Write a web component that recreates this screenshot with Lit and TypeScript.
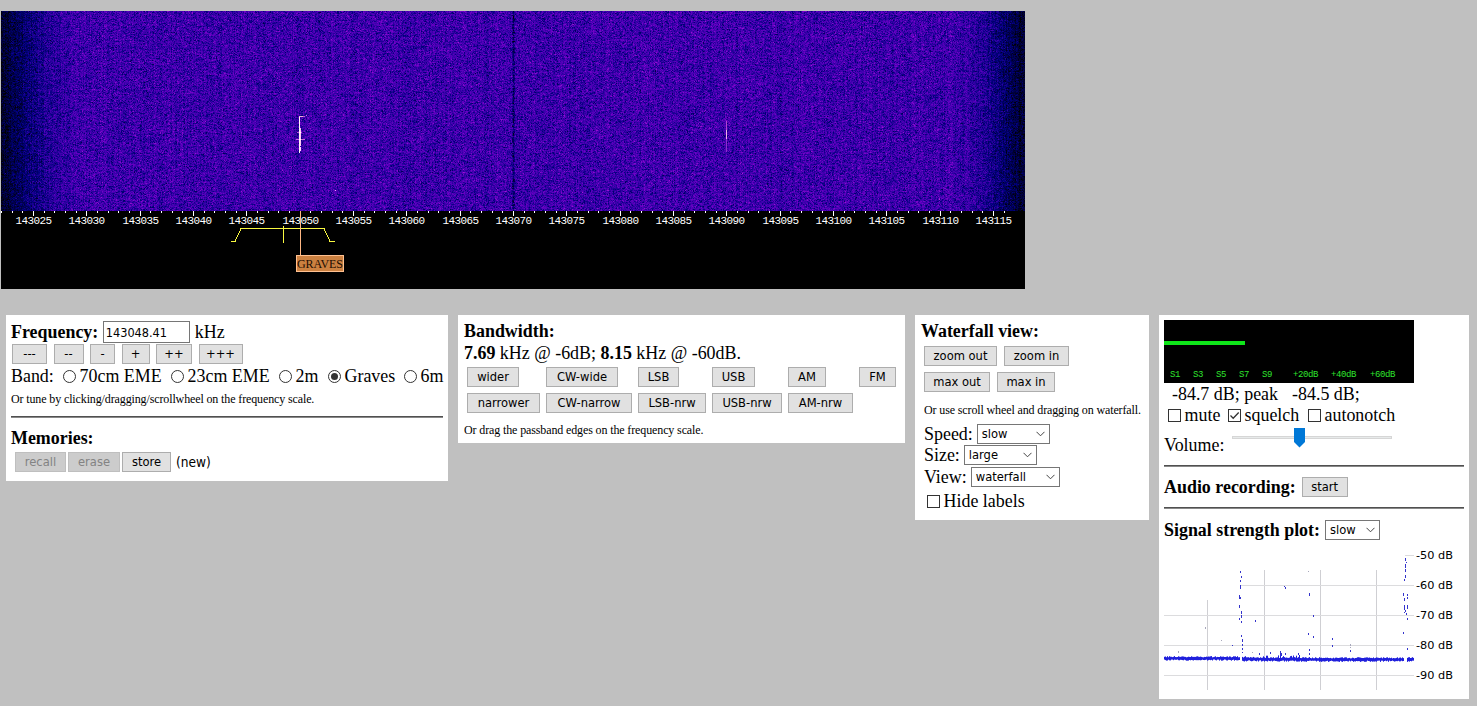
import { LitElement, html, svg, css } from "lit";
import { customElement, property } from "lit/decorators.js";

/* Small deterministic generator so that the noise is stable between paints. */
function random(seed: number) {
  let s = seed >>> 0;
  return () => {
    s = (s + 0x6d2b79f5) >>> 0;
    let t = s;
    t = Math.imul(t ^ (t >>> 15), t | 1);
    t ^= t + Math.imul(t ^ (t >>> 7), t | 61);
    return ((t ^ (t >>> 14)) >>> 0) / 4294967296;
  };
}

const STOPS: [number, number, number, number][] = [
  [0, 0, 0, 0],
  [0.3, 0, 0, 124],
  [0.5, 56, 0, 170],
  [0.7, 104, 0, 196],
  [0.88, 164, 24, 212],
  [1, 255, 200, 255],
];

function palette(v: number): [number, number, number] {
  v = Math.max(0, Math.min(1, v));
  for (let i = 1; i < STOPS.length; i++) {
    if (v <= STOPS[i][0]) {
      const a = STOPS[i - 1];
      const b = STOPS[i];
      const f = (v - a[0]) / (b[0] - a[0]);
      return [a[1] + (b[1] - a[1]) * f, a[2] + (b[2] - a[2]) * f, a[3] + (b[3] - a[3]) * f];
    }
  }
  return [255, 255, 255];
}

@customElement("wf-display")
export class WfDisplay extends LitElement {
  static styles = css`
    :host { display: block; width: 1024px; height: 278px; background: #000; }
    canvas, svg { display: block; }
    .digits { font: 11px "Liberation Mono", monospace; letter-spacing: -0.6px; fill: #fff; }
    .station { font: 12px "Liberation Serif", serif; fill: #1c0c00; }
  `;

  firstUpdated() {
    const canvas = this.renderRoot.querySelector("canvas") as HTMLCanvasElement;
    const ctx = canvas.getContext("2d")!;
    const W = 1024;
    const H = 200;
    const img = ctx.createImageData(W, H);
    const rnd = random(143050);
    const column: number[] = [];
    for (let x = 0; x < W; x++) {
      let c = (rnd() - 0.5) * 0.09;
      if (x >= 511 && x <= 513) c -= x === 512 ? 0.26 : 0.15;
      column.push(c);
    }
    for (let y = 0; y < H; y++) {
      let drift = 0;
      for (let x = 0; x < W; x++) {
        const edge = Math.min(x / 84, (W - 1 - x) / 76, 1);
        const level = 0.09 + 0.42 * Math.sin((edge * Math.PI) / 2);
        const n = (rnd() + rnd() + rnd() - 1.5) / 1.5;
        drift = drift * 0.45 + n * 0.55;
        let v = level + column[x] + (n * 0.26 + drift * 0.14) * (0.55 + 0.45 * edge);
        if (rnd() > 0.9996) v += 0.2;
        const [r, g, b] = palette(v);
        const i = (y * W + x) * 4;
        img.data[i] = r;
        img.data[i + 1] = g;
        img.data[i + 2] = b;
        img.data[i + 3] = 255;
      }
    }
    ctx.putImageData(img, 0, 0);
    const mark = (c: string, x: number, y: number, w: number, h: number) => {
      ctx.fillStyle = c;
      ctx.fillRect(x, y, w, h);
    };
    mark("#fff0f4", 298, 105, 1, 37);
    mark("#ffc8f4", 299, 117, 1, 18);
    mark("#ffd8ff", 299, 136, 1, 4);
    mark("#f4a8d8", 298, 105, 4, 1);
    mark("#b858d8", 302, 105, 2, 1);
    mark("#c468dc", 295, 128, 9, 1);
    mark("#b450d4", 296, 121, 5, 1);
    mark("#ffffff", 298, 121, 2, 1);
    mark("#ffffff", 298, 128, 2, 1);
    mark("#b044d0", 725, 110, 1, 12);
    mark("#f0b0e8", 725, 119, 1, 9);
    mark("#8c30cc", 725, 128, 1, 13);
    mark("#c070e0", 305, 104, 1, 1);
  }

  render() {
    const ticks = Array.from({ length: 95 }, (_, i) => i - 3);
    return html`
      <canvas width="1024" height="200"></canvas>
      <svg width="1024" height="78" shape-rendering="crispEdges">
        ${ticks.map((k) => {
          const x = 32 + Math.round((k * 32) / 3);
          return svg`<rect x=${x} y="0" width="1" height=${k % 5 === 0 ? 5 : 2} fill="#fff"></rect>`;
        })}
        ${Array.from({ length: 19 }, (_, i) => svg`
          <text class="digits" x=${14.5 + Math.round((i * 160) / 3)} y="13">${143025 + i * 5}</text>`)}
        <path d="M230 30.5H234L240 17.5H323L329 30.5H334" fill="none" stroke="#f8f840"></path>
        <rect x="282" y="15" width="1" height="17" fill="#f8f840"></rect>
        <rect x="299" y="0" width="1" height="44" fill="#ffb884"></rect>
        <rect x="295.5" y="44.500" width="47" height="16" fill="#cb8040" stroke="#ffc090"></rect>
        <text class="station" x="296" y="57" textLength="46">GRAVES</text>
      </svg>`;
  }
}

@customElement("pick-list")
export class PickList extends LitElement {
  @property() value = "";
  @property({ type: Number }) width = 73;
  static styles = css`
    :host { display: inline-block; }
    .box {
      display: flex; align-items: center; justify-content: space-between;
      box-sizing: border-box; height: 20px; padding: 0 4px;
      border: 1px solid #767676; background: #fff; color: #000;
      font: 12.8px/18px "DejaVu Sans Condensed", "DejaVu Sans", sans-serif;
    }
  `;
  render() {
    return html`<div class="box" style="width:${this.width}px">
      <span>${this.value}</span>
      <svg width="9" height="6"><path d="M.5 .8L4.500 4.800L8.500 .8" fill="none" stroke="#444"></path></svg>
    </div>`;
  }
}

@customElement("app-root")
export class AppRoot extends LitElement {
  static styles = css`
    :host {
      display: block; box-sizing: border-box; width: 1477px; height: 706px; overflow: hidden;
      padding-top: 11px; background: #c0c0c0; color: #000;
      font: 17.93px/20px "Liberation Serif", serif; white-space: nowrap;
    }
    wf-display { margin-left: 1px; }
    .panels { display: flex; align-items: flex-start; gap: 10px; margin: 26px 0 0 6px; }
    .panel { box-sizing: border-box; display: grid; align-items: center; padding: 5px; background: #fff; }
    .tune { width: 442px; height: 166px; grid-template-rows: 24px 20px 24px 22px 14px 28px 20px; }
    .band { width: 447px; height: 128px; grid-template-rows: 22px 22px 49px 34px; padding-left: 6px; }
    .view { width: 234px; height: 205px; grid-template-rows: 22px 28px 24px 32px 16px 26px 18px 30px; padding-left: 9px; }
    .audio { width: 310px; height: 384px; grid-template-rows: 63px 22px 20px 40px 2px 40px 2px 36px 149px; }
    .row { display: flex; align-items: center; }
    .small { font-size: 12px; letter-spacing: -0.125px; }
    .rule { height: 2px; background: linear-gradient(#505050 50%, #888 50%); }
    .title { font-weight: bold; }
    .view .title { margin-left: -3px; }
    button {
      box-sizing: border-box; height: 20px; padding: 0; border: 1px solid #adadad; border-radius: 0;
      background: #e1e1e1; color: #000;
      font: 12.8px/18px "DejaVu Sans Condensed", "DejaVu Sans", sans-serif;
    }
    button:disabled { border-color: #bfbfbf; background: #ccc; color: #838383; }
    .sans { font: 13.6px/18px "DejaVu Sans Condensed", "DejaVu Sans", sans-serif; }
    .steps { gap: 6.5px; padding-left: 1px; }
    .memory { gap: 2px; padding-left: 4px; }
    .memory .sans { margin-left: 3px; }
    .freq {
      box-sizing: border-box; width: 87px; height: 22px; margin: 0 5px 0 4.500px; padding: 0 2px;
      border: 1px solid #767676; border-radius: 0; background: #fff; color: #000;
      font: 12.6px/18px "DejaVu Sans Condensed", "DejaVu Sans", sans-serif;
    }
    .choice { display: flex; align-items: center; gap: 3.5px; }
    .choice svg { flex: none; }
    .modes {
      display: grid; align-self: end; margin-left: 3px; justify-items: start; row-gap: 6px;
      grid-template-columns: 79px 92px 74px 76px 71px 38px;
    }
    .zooms { gap: 7px; }
    .field { gap: 4px; }
    .hide { padding-left: 3px; }
    .levels { padding-left: 8px; gap: 14px; }
    .flags { padding-left: 4px; }
    .volume { align-self: stretch; }
    .meter, .plot { display: block; }
    .meter text { font: 9px "Liberation Mono", monospace; letter-spacing: -0.4px; fill: #2ee42e; }
    .plot text { font: 11.3px "DejaVu Sans", sans-serif; fill: #000; }
    .slider { align-self: flex-start; margin: 3px 0 0 8px; }
    .gap { gap: 5px; }
    .record { gap: 6px; }
    .strength { padding-top: 6px; }
  `;

  private btn(label: string, width: number, disabled = false) {
    return html`<button style="width:${width}px" ?disabled=${disabled}>${label}</button>`;
  }

  private radio(label: string, width: number, on = false) {
    return html`<label class="choice" style="width:${width}px">
      <svg width="13" height="13"><circle cx="6.500" cy="6.500" r="6" fill="#fff" stroke="#333"></circle>
        ${on ? svg`<circle cx="6.500" cy="6.500" r="3.500" fill="#333"></circle>` : ""}</svg>
      <span>${label}</span></label>`;
  }

  private check(label: string, width: number, on = false) {
    return html`<label class="choice" style="width:${width}px">
      <svg width="13" height="13"><rect x=".5" y=".5" width="12" height="12" fill="#fff" stroke="#333"></rect>
        ${on ? svg`<path d="M2.500 6.500L5.200 9.200L10.700 3.500" fill="none" stroke="#333" stroke-width="1.300"></path>` : ""}</svg>
      <span>${label}</span></label>`;
  }

  private meter() {
    const marks: [number, string][] = [
      [6, "S1"], [29, "S3"], [52, "S5"], [75, "S7"], [98, "S9"], [129, "+20dB"], [167, "+40dB"], [206, "+60dB"],
    ];
    return html`<svg class="meter" width="250" height="63">
      <rect width="250" height="63"></rect>
      <rect y="21" width="81" height="4" fill="#0fe61a"></rect>
      ${marks.map(([x, t]) => svg`<text x=${x} y="57">${t}</text>`)}
    </svg>`;
  }

  /* y = 4 stands for -50 dB, 30 px per 10 dB; the view box leaves headroom for the top label. */
  private plot() {
    const rnd = random(77);
    let trace = "";
    for (let x = 0; x < 250; x++) {
      if ((x > 75 && x < 78) || (x > 239 && x < 243)) continue;
      const base = x < 76 ? 106.300 : 106.600 + Math.min(x, 160) / 200;
      const busy = x > 78 && x < 136 && rnd() > 0.75 ? rnd() * 2.500 : 0;
      const top = base - rnd() * 1.200 - busy;
      trace += `M${x + 0.5} ${top.toFixed(1)}V${(base + 2.200 + rnd() * 1.300).toFixed(1)}`;
    }
    const dots: [number, number, number][] = [
      [76, 20, 2], [77, 25, 2], [76, 29, 2], [76, 34, 4], [75, 44, 4], [76, 46, 2], [75, 54, 3], [77, 60, 3], [77, 64, 3],
      [75, 67, 2], [77, 70, 2], [77, 84, 2], [78, 88, 3], [78, 93, 2], [78, 97, 2], [78, 101, 1],
      [241, 7, 3], [241, 13, 4], [241, 18, 3], [241, 24, 3], [240, 28, 2], [242, 11, 1],
      [239, 42, 3], [240, 47, 3], [243, 43, 2], [243, 46, 2], [240, 54, 5], [243, 54, 4], [241, 59, 2], [242, 62, 2],
      [243, 67, 2], [239, 81, 2], [243, 97, 2], [240, 61, 1],
      [121, 36, 2], [120, 35, 1], [145, 42, 3], [149, 64, 2], [144, 82, 2], [149, 85, 2], [91, 69, 2],
      [168, 87, 2], [168, 94, 2], [186, 99, 2], [145, 98, 2], [116, 100, 4], [117, 102, 3],
      [121, 102, 2], [95, 102, 2], [106, 101, 2], [134, 102, 2], [145, 102, 2], [68, 94, 1],
    ];
    const faint: [number, number, number][] = [
      [41, 76, 2], [57, 89, 1], [14, 100, 2], [144, 20, 1], [88, 101, 1], [186, 93, 2], [186, 96, 1],
    ];
    return html`<svg class="plot" width="300" height="149" viewBox="0 -6 300 149">
      <g shape-rendering="crispEdges" fill="#cfcfd3">
        <rect x="43" y="49" width="1" height="90"></rect>
        <rect x="100" y="19" width="1" height="120"></rect>
        <rect x="156" y="19" width="1" height="120"></rect>
        <rect x="212" y="19" width="1" height="120"></rect>
      </g>
      <g shape-rendering="crispEdges" fill="#dcdcde">
        <rect x="241" y="4" width="9" height="1"></rect>
        <rect x="76" y="34" width="174" height="1"></rect>
        <rect y="64" width="250" height="1"></rect>
        <rect y="94" width="250" height="1"></rect>
        <rect y="124" width="250" height="1"></rect>
      </g>
      ${[50, 60, 70, 80, 90].map((d, i) => svg`<text x="252" y=${8 + i * 30} textLength="37">-${d} dB</text>`)}
      <path d=${trace} stroke="#2020dc" fill="none"></path>
      <g shape-rendering="crispEdges" fill="#3434cc">
        ${dots.map(([x, y, h]) => svg`<rect x=${x} y=${y} width="1" height=${h}></rect>`)}
      </g>
      <g shape-rendering="crispEdges" fill="#a8a8bc">
        ${faint.map(([x, y, h]) => svg`<rect x=${x} y=${y} width="1" height=${h}></rect>`)}
      </g>
    </svg>`;
  }

  render() {
    return html`
      <wf-display></wf-display>
      <div class="panels">
        <section class="panel tune">
          <div class="row"><span class="title">Frequency:</span><input class="freq" .value=${"143048.41"}><span>kHz</span></div>
          <div class="row steps">
            ${this.btn("---", 35)}${this.btn("--", 30)}${this.btn("-", 25)}${this.btn("+", 28)}${this.btn("++", 36)}${this.btn("+++", 44)}
          </div>
          <div class="row">
            <label style="width:52px">Band:</label>
            ${this.radio("70cm EME", 108)}${this.radio("23cm EME", 108)}${this.radio("2m", 49)}${this.radio("Graves", 76, true)}${this.radio("6m", 36)}
          </div>
          <div class="small">Or tune by clicking/dragging/scrollwheel on the frequency scale.</div>
          <div class="rule"></div>
          <div class="title">Memories:</div>
          <div class="row memory">
            ${this.btn("recall", 51, true)}${this.btn("erase", 52, true)}${this.btn("store", 49)}<span class="sans">(new)</span>
          </div>
        </section>

        <section class="panel band">
          <div class="title">Bandwidth:</div>
          <div><b>7.69</b> kHz @ -6dB; <b>8.15</b> kHz @ -60dB.</div>
          <div class="modes">
            ${this.btn("wider", 52)}${this.btn("CW-wide", 72)}${this.btn("LSB", 41)}${this.btn("USB", 43)}${this.btn("AM", 38)}${this.btn("FM", 37)}
            ${this.btn("narrower", 73)}${this.btn("CW-narrow", 86)}${this.btn("LSB-nrw", 68)}${this.btn("USB-nrw", 70)}${this.btn("AM-nrw", 65)}
          </div>
          <div class="small">Or drag the passband edges on the frequency scale.</div>
        </section>

        <section class="panel view">
          <div class="title">Waterfall view:</div>
          <div class="row zooms">${this.btn("zoom out", 73)}${this.btn("zoom in", 65)}</div>
          <div class="row zooms">${this.btn("max out", 66)}${this.btn("max in", 58)}</div>
          <div class="small">Or use scroll wheel and dragging on waterfall.</div>
          <div class="row field">Speed: <pick-list value="slow" width="73"></pick-list></div>
          <div class="row field">Size: <pick-list value="large" width="73"></pick-list></div>
          <div class="row field">View: <pick-list value="waterfall" width="89"></pick-list></div>
          <div class="row hide">${this.check("Hide labels", 100)}</div>
        </section>

        <section class="panel audio">
          ${this.meter()}
          <div class="row levels"><span>-84.7 dB; peak</span><span>-84.5 dB;</span></div>
          <div class="row flags">${this.check("mute", 60)}${this.check("squelch", 80, true)}${this.check("autonotch", 90)}</div>
          <div class="row volume">Volume:
            <svg class="slider" width="160" height="20">
              <rect x="0" y="8" width="160" height="3" fill="#d6d6d6"></rect>
              <rect x="1" y="9" width="158" height="1" fill="#e7eaea"></rect>
              <path d="M62 0H73V14L67.500 19.500L62 14Z" fill="#0078d7"></path>
            </svg>
          </div>
          <div class="rule"></div>
          <div class="row record"><span class="title">Audio recording:</span>${this.btn("start", 46)}</div>
          <div class="rule"></div>
          <div class="row gap strength"><span class="title">Signal strength plot:</span><pick-list value="slow" width="55"></pick-list></div>
          ${this.plot()}
        </section>
      </div>`;
  }
}
